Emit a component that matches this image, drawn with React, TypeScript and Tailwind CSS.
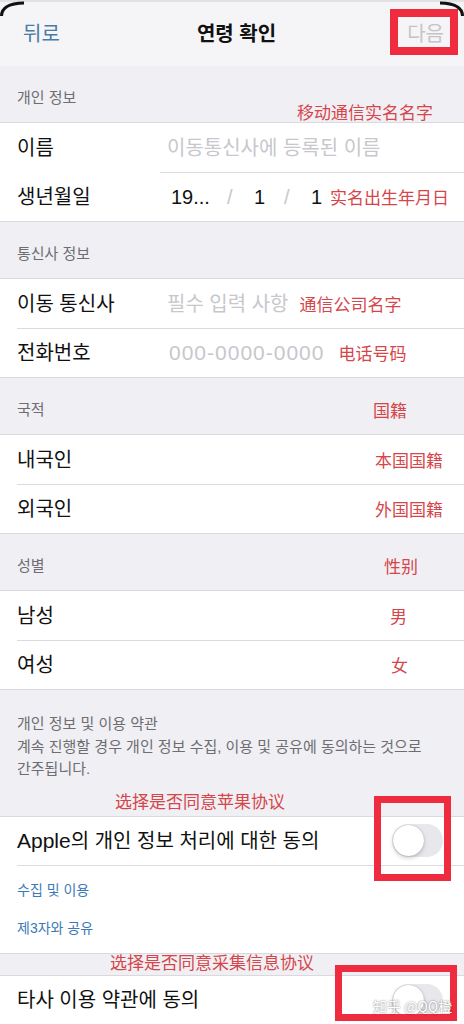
import React from "react";

const KR = "font-['Liberation_Sans','Noto_Sans_CJK_KR',sans-serif]";
const CN = "font-['Noto_Sans_CJK_SC',sans-serif] text-[#d6454a] text-[17px] leading-[20px]";

function Header({ children, right }: { children: React.ReactNode; right?: React.ReactNode }) {
  return (
    <div className="h-[56px] flex items-end justify-between pl-[17px] pb-[16px]">
      <span className="text-[15px] leading-[16px] text-[#6d6d72]">{children}</span>
      {right}
    </div>
  );
}

function Group({ children }: { children: React.ReactNode }) {
  return <div className="bg-white border-y border-[#d9d9de]">{children}</div>;
}

function Toggle() {
  return (
    <div className="w-[51px] h-[33px] rounded-full bg-[#e8e8ec] p-[1px] flex items-center">
      <div className="w-[31px] h-[31px] rounded-full bg-white shadow-[0_2px_4px_rgba(0,0,0,0.2),0_0_1px_rgba(0,0,0,0.3)]" />
    </div>
  );
}

export default function App() {
  return (
    <div className={`relative w-[464px] h-[1024px] overflow-hidden bg-[#efeff4] text-[#111] ${KR}`}>
      {/* nav */}
      <div className="h-[66px] flex items-center justify-between px-[23px] border-t-[2px] border-[#e2e2e6] bg-[#f5f5f7]">
        <span className="text-[20px] text-[#4a7aa6]">뒤로</span>
        <span className="text-[20px] font-bold ml-[6px]">연령 확인</span>
        <span className="text-[20px] text-[#c4c4c8] mr-[-3px]">다음</span>
      </div>

      <Header>개인 정보</Header>
      <Group>
        <div className="h-[49px] flex items-center">
          <span className="w-[167px] pl-[17px] text-[20px]">이름</span>
          <span className="text-[20px] text-[#c7c7cc]">이동통신사에 등록된 이름</span>
        </div>
        <div className="ml-[160px] h-px bg-[#dcdce0]" />
        <div className="h-[48px] flex items-center">
          <span className="w-[171px] pl-[17px] text-[20px]">생년월일</span>
          <span className="w-[56px] text-[20px]">19...</span>
          <span className="w-[27px] text-[20px] text-[#c7c7cc]">/</span>
          <span className="w-[30px] text-[20px]">1</span>
          <span className="w-[27px] text-[20px] text-[#c7c7cc]">/</span>
          <span className="w-[19px] text-[20px]">1</span>
          <span className={CN}>实名出生年月日</span>
        </div>
      </Group>

      <Header>통신사 정보</Header>
      <Group>
        <div className="h-[49px] flex items-center">
          <span className="w-[167px] pl-[17px] text-[20px]">이동 통신사</span>
          <span className="text-[20px] text-[#c7c7cc]">필수 입력 사항</span>
          <span className={`${CN} ml-[11px]`}>通信公司名字</span>
        </div>
        <div className="ml-[17px] h-px bg-[#dcdce0]" />
        <div className="h-[48px] flex items-center">
          <span className="w-[169px] pl-[17px] text-[20px]">전화번호</span>
          <span className="text-[21px] tracking-[1px] text-[#c7c7cc]">000-0000-0000</span>
          <span className={`${CN} ml-[14px]`}>电话号码</span>
        </div>
      </Group>

      <Header right={<span className={`${CN} mr-[57px] translate-y-[2px]`}>国籍</span>}>국적</Header>
      <Group>
        <div className="h-[49px] flex items-center justify-between">
          <span className="pl-[17px] text-[20px]">내국인</span>
          <span className={`${CN} mr-[21px]`}>本国国籍</span>
        </div>
        <div className="ml-[17px] h-px bg-[#dcdce0]" />
        <div className="h-[48px] flex items-center justify-between">
          <span className="pl-[17px] text-[20px]">외국인</span>
          <span className={`${CN} mr-[21px]`}>外国国籍</span>
        </div>
      </Group>

      <Header right={<span className={`${CN} mr-[46px] translate-y-[2px]`}>性别</span>}>성별</Header>
      <Group>
        <div className="h-[49px] flex items-center justify-between">
          <span className="pl-[17px] text-[20px]">남성</span>
          <span className={`${CN} mr-[57px]`}>男</span>
        </div>
        <div className="ml-[17px] h-px bg-[#dcdce0]" />
        <div className="h-[48px] flex items-center justify-between">
          <span className="pl-[17px] text-[20px]">여성</span>
          <span className={`${CN} mr-[56px]`}>女</span>
        </div>
      </Group>

      {/* footer */}
      <div className="pt-[23px] pl-[17px] pr-[10px] text-[15px] leading-[22.5px] text-[#6d6d72]">
        <p>개인 정보 및 이용 약관</p>
        <p>
          계속 진행할 경우 개인 정보 수집, 이용 및 공유에 동의하는 것으로
          <br />
          간주됩니다.
        </p>
      </div>
      <div className="h-[35px] pl-[115px] pt-[10px]">
        <span className={CN}>选择是否同意苹果协议</span>
      </div>

      <Group>
        <div className="h-[48px] flex items-center justify-between pl-[17px] pr-[21px]">
          <span className="text-[20px]">
            <span className="text-[21px]">Apple</span>의 개인 정보 처리에 대한 동의
          </span>
          <Toggle />
        </div>
        <div className="ml-[17px] h-px bg-[#dcdce0]" />
        <div className="pl-[17px] pt-[14px] pb-[15px] flex flex-col gap-[18px] text-[14px] leading-[20px] text-[#3d7ab5]">
          <span>수집 및 이용</span>
          <span>제3자와 공유</span>
        </div>
      </Group>

      <div className="h-[21px]" />
      <Group>
        <div className="h-[49px] flex items-center justify-between pl-[17px] pr-[21px]">
          <span className="text-[20px]">타사 이용 약관에 동의</span>
          <Toggle />
        </div>
      </Group>

      {/* overlays */}
      <span className={`${CN} absolute left-[297px] top-[102px]`}>移动通信实名名字</span>
      <span className={`${CN} absolute left-[110px] top-[952px]`}>选择是否同意采集信息协议</span>

      <div className="absolute left-[390px] top-[9px] w-[68px] h-[46px] border-[8px] border-[#ef2b3f]" />
      <div className="absolute left-[374px] top-[796px] w-[77px] h-[85px] border-[7px] border-[#ef2b3f]" />
      <div className="absolute left-[335px] top-[965px] w-[122px] h-[56px] border-[7px] border-[#ef2b3f]" />

      <span className="absolute left-[373px] top-[996px] text-[14px] leading-[20px] text-white font-['Noto_Sans_CJK_SC',sans-serif] [text-shadow:0_0_2px_rgba(0,0,0,0.55)]">
        知乎 @QQ橙
      </span>

      <svg className="absolute left-0 top-0" width="30" height="18" viewBox="0 0 30 18">
        <path d="M1.5 16 Q1.5 3.5 24 3" stroke="#111" strokeWidth="3" fill="none" />
      </svg>
      <svg className="absolute right-0 top-0" width="30" height="18" viewBox="0 0 30 18">
        <path d="M28.5 16 Q28.5 3.5 6 3" stroke="#111" strokeWidth="3" fill="none" />
      </svg>
    </div>
  );
}
